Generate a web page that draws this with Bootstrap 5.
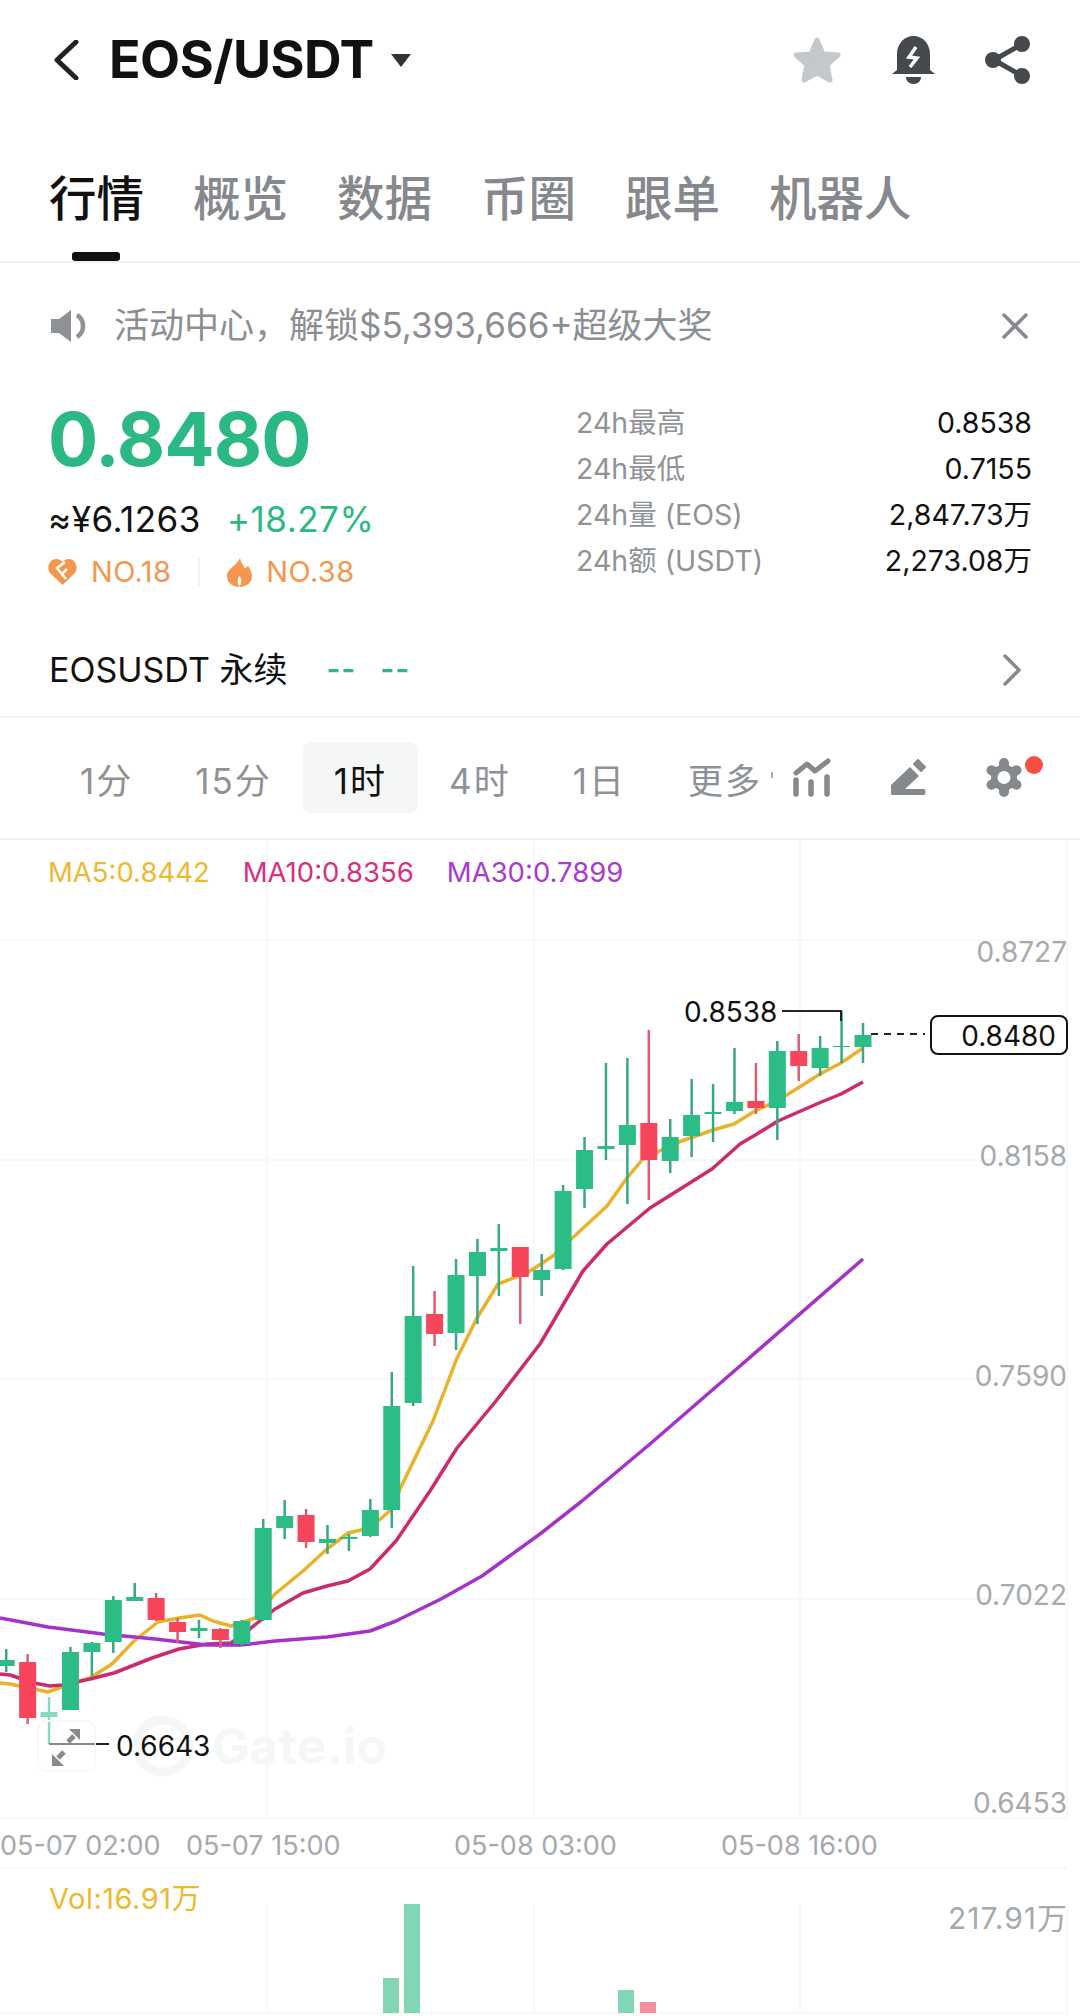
<!DOCTYPE html>
<html lang="zh-CN">
<head>
    <meta charset="UTF-8">
    <meta name="viewport" content="width=device-width, initial-scale=1.0">
    <title>EOS/USDT</title>
    <link href="https://cdn.jsdelivr.net/npm/bootstrap@5.3.0/dist/css/bootstrap.min.css" rel="stylesheet">
    <style>
        body {
            background-color: #fff;
            color: #111;
            font-family: Inter, "Noto Sans CJK SC", sans-serif;
            overflow: hidden;
        }
        .page { width: 1080px; height: 2016px; overflow: hidden; }
        .top-bar { height: 120px; padding: 0 49px 0 53px; }
        .pair-title { font-size: 52px; font-weight: 700; margin-left: 30px; letter-spacing: -.5px; line-height: 1; }
        .top-icons { gap: 50px; }
        .main-tabs { height: 143px; padding: 0 0 0 49px; gap: 49px; border-bottom: 2px solid #f0f1f2; position: relative; }
        .main-tab { font-size: 47.5px; font-weight: 500; color: #85888c; line-height: 1; padding-top: 17px; }
        .main-tab.on { color: #111; }
        .tab-mark { position: absolute; left: 72px; bottom: 0; width: 48px; height: 9px; border-radius: 3px; background: #111; }
        .notice { height: 125px; padding: 0 52px 0 51px; }
        .notice-text { font-size: 35px; color: #8b8e92; margin-left: 27px; line-height: 1; }
        .stats { height: 235px; padding: 11px 48px 0 48px; }
        .last-price { font-size: 74.5px; font-weight: 700; color: #2bb884; line-height: 80px; letter-spacing: -1px; }
        .sub-price { font-size: 35px; line-height: 40px; margin-top: 20px; letter-spacing: .5px; }
        .sub-price .up { color: #2bb884; margin-left: 26px; }
        .rank-row { font-size: 29px; line-height: 36px; margin-top: 15px; color: #f5964f; letter-spacing: .4px; }
        .rank-icon { margin-right: 14px; }
        .rank-sep { width: 2px; height: 28px; background: #f2f2f2; margin: 0 27px 0 27px; }
        .stat-box { width: 456px; padding-top: 1px; }
        .stat-row { height: 46px; font-size: 28.5px; }
        .stat-row span:first-child { color: #8f9296; }
        .perp { height: 95px; padding: 0 58px 0 49px; border-bottom: 2px solid #f2f3f4; }
        .perp-name { font-size: 34px; }
        .perp-dash { font-size: 30px; font-weight: 600; color: #2bb884; margin-left: 39px; letter-spacing: 1px; }
        .period-row { height: 122px; padding: 24px 62px 0 49px; border-bottom: 2px solid #f2f3f4; position: relative; }
        .period { font-size: 35px; letter-spacing: 2px; color: #8e9195; padding: 0 31px; height: 71px; line-height: 79px; border-radius: 8px; white-space: nowrap; flex-shrink: 0; }
        .period.on { background: #f5f6f7; color: #111; }
        .period-icons { gap: 59px; margin-top: 16px; flex-shrink: 0; }
        .more-tick { position: absolute; left: 771px; top: 54px; width: 2px; height: 6px; background: #a9acb0; }
        .gear-wrap { position: relative; }
        .gear-dot { position: absolute; width: 18px; height: 18px; border-radius: 50%; background: #f4503f; right: -21px; top: -2px; }
        .chart-box { position: relative; height: 1177px; }
        .chart-box svg { display: block; }
        .ma-legend { position: absolute; left: 48px; top: 14px; font-size: 27.5px; gap: 33px; line-height: 36px; }
        .ma5 { color: #ecb92f; }
        .ma10 { color: #d6307f; }
        .ma30 { color: #a83bcb; }
        .axis-label { font: 28px Inter, "Noto Sans CJK SC", sans-serif; fill: #a6a9ad; }
        .date-label { font: 27px Inter, sans-serif; fill: #a6a9ad; }
        .amount-label { font: 30px Inter, "Noto Sans CJK SC", sans-serif; fill: #a6a9ad; letter-spacing: 1px; }
        .mark-label { font: 28px Inter, sans-serif; fill: #111; }
        .vol-label { font: 29px Inter, "Noto Sans CJK SC", sans-serif; fill: #ecb92f; letter-spacing: .5px; }
        .wm-label { font: 700 50px Inter, sans-serif; fill: #f5f6f6; }
    </style>
</head>
<body>
<div class="page">

    <div class="top-bar d-flex align-items-center">
        <svg width="26" height="40" viewBox="0 0 26 40"><polyline points="23,2 4,20 23,38" fill="none" stroke="#222" stroke-width="5" stroke-linecap="round" stroke-linejoin="round"/></svg>
        <span class="pair-title">EOS/USDT</span>
        <svg class="ms-3" width="22" height="15" viewBox="0 0 22 15"><polygon points="1,1 21,1 11,14" fill="#333"/></svg>
        <div class="top-icons d-flex align-items-center ms-auto">
            <svg width="50" height="48" viewBox="0 0 50 48"><polygon points="25,4 31,18 46,19 35,29 38,44 25,37 12,44 15,29 4,19 19,18" fill="#c4c8cb" stroke="#c4c8cb" stroke-width="5" stroke-linejoin="round"/></svg>
            <svg width="43" height="48" viewBox="0 0 43 48">
                <path d="M5 34V18C5 8 12 0 21.500 0S38 8 38 18V34L43 38H0Z" fill="#45484d"/>
                <path d="M14 41H29C29 45 26 48 21.500 48S14 45 14 41Z" fill="#45484d"/>
                <path d="M24 11L17 21L25 22L18 31" fill="none" stroke="#fff" stroke-width="3.500"/>
            </svg>
            <svg width="46" height="48" viewBox="0 0 46 48">
                <path d="M37 8L9 24L37 40" fill="none" stroke="#45484d" stroke-width="5"/>
                <circle cx="37" cy="8" r="8" fill="#45484d"/><circle cx="8" cy="24" r="8" fill="#45484d"/><circle cx="37" cy="40" r="8" fill="#45484d"/>
            </svg>
        </div>
    </div>

    <div class="main-tabs d-flex align-items-center">
        <span class="main-tab on">行情</span>
        <span class="main-tab">概览</span>
        <span class="main-tab">数据</span>
        <span class="main-tab">币圈</span>
        <span class="main-tab">跟单</span>
        <span class="main-tab">机器人</span>
        <div class="tab-mark"></div>
    </div>

    <div class="notice d-flex align-items-center">
        <svg width="36" height="32" viewBox="0 0 36 32">
            <path d="M0 9H8L20 0V32L8 23H0Z" fill="#8e9195"/>
            <path d="M26 5C34 10 34 22 26 27" fill="none" stroke="#8e9195" stroke-width="4.500"/>
        </svg>
        <span class="notice-text">活动中心，解锁$5,393,666+超级大奖</span>
        <svg class="ms-auto" width="26" height="26" viewBox="0 0 26 26"><path d="M2 2L24 24M24 2L2 24" stroke="#85888c" stroke-width="3.500" stroke-linecap="round"/></svg>
    </div>

    <div class="stats d-flex justify-content-between">
        <div>
            <div class="last-price">0.8480</div>
            <div class="sub-price">≈¥6.1263<span class="up">+18.27%</span></div>
            <div class="rank-row d-flex align-items-center">
                <svg width="29" height="26" viewBox="0 0 29 26" class="rank-icon">
                    <path d="M14.500 26L2 14C-2 8 2 0 8 0C11 0 13 1 14.500 3C16 1 18 0 21 0C27 0 31 8 27 14Z" fill="#f5964f"/>
                    <path d="M17 3L9 9L13 14M19 10L14 15L18 20" fill="none" stroke="#fff" stroke-width="2.500"/>
                </svg>
                <span>NO.18</span>
                <div class="rank-sep"></div>
                <svg width="25" height="29" viewBox="0 0 25 29" class="rank-icon">
                    <path d="M13 0C14 6 17 7 18 11C19 9 20 9 21 8C24 12 25 16 25 18C25 25 19 29 12.500 29C6 29 0 25 0 18C0 10 10 8 13 0Z" fill="#f5964f"/>
                    <path d="M12.500 18C10 21 10 24 12.500 29C15 24 15 21 12.500 18Z" fill="#fff"/>
                </svg>
                <span>NO.38</span>
            </div>
        </div>
        <div class="stat-box">
            <div class="stat-row d-flex justify-content-between align-items-center"><span>24h最高</span><span>0.8538</span></div>
            <div class="stat-row d-flex justify-content-between align-items-center"><span>24h最低</span><span>0.7155</span></div>
            <div class="stat-row d-flex justify-content-between align-items-center"><span>24h量 (EOS)</span><span>2,847.73万</span></div>
            <div class="stat-row d-flex justify-content-between align-items-center"><span>24h额 (USDT)</span><span>2,273.08万</span></div>
        </div>
    </div>

    <div class="perp d-flex align-items-center">
        <span class="perp-name">EOSUSDT 永续</span>
        <span class="perp-dash">--</span>
        <span class="perp-dash ms-4">--</span>
        <svg class="ms-auto" width="20" height="32" viewBox="0 0 20 32"><polyline points="3,2 17,16 3,30" fill="none" stroke="#85888c" stroke-width="3.500" stroke-linecap="round" stroke-linejoin="round"/></svg>
    </div>

    <div class="period-row d-flex align-items-start">
        <span class="period">1分</span>
        <span class="period">15分</span>
        <span class="period on">1时</span>
        <span class="period">4时</span>
        <span class="period">1日</span>
        <span class="period">更多</span>
        <span class="more-tick"></span>
        <div class="period-icons d-flex align-items-center ms-auto">
            <svg width="38" height="39" viewBox="0 0 38 39">
                <polyline points="3,15 14,6 22,13 35,3" fill="none" stroke="#85888c" stroke-width="5" stroke-linecap="round" stroke-linejoin="round"/>
                <path d="M3 22V36M18 24V36M34 19V36" stroke="#85888c" stroke-width="5.500" stroke-linecap="round"/>
            </svg>
            <svg width="37" height="37" viewBox="0 0 37 37">
                <path d="M1 35V26L20 8L29 17L15 30H34C36 30 36 36 34 36H2Z" fill="#85888c"/>
                <path d="M24 5L28 1L35 8L31 12Z" fill="#85888c" stroke="#85888c" stroke-width="2" stroke-linejoin="round"/>
            </svg>
            <div class="gear-wrap">
                <svg class="d-block" width="36" height="39" viewBox="0 0 36 39">
                    <path d="M18 5V34M5.500 12.250L30.500 26.750M30.500 12.250L5.500 26.750" stroke="#85888c" stroke-width="10" stroke-linecap="round"/>
                    <circle cx="18" cy="19.500" r="13" fill="#85888c"/>
                    <circle cx="18" cy="19.500" r="6.500" fill="#fff"/>
                </svg>
                <div class="gear-dot"></div>
            </div>
        </div>
    </div>

    <div class="chart-box">
        <svg id="klineChart" width="1080" height="1177" viewBox="0 839 1080 1177"></svg>
        <div class="ma-legend d-flex">
            <span class="ma5">MA5:0.8442</span>
            <span class="ma10">MA10:0.8356</span>
            <span class="ma30">MA30:0.7899</span>
        </div>
    </div>
</div>

<script src="https://cdn.jsdelivr.net/npm/bootstrap@5.3.0/dist/js/bootstrap.bundle.min.js"></script>
<script>
    // [high, open/close top, open/close bottom, low, colour]
    var candles = [
        [1648, 1659, 1665, 1671, 'g'], [1653, 1661, 1717, 1723, 'r'], [1696, 1711, 1716, 1743, 'f'],
        [1646, 1651, 1709, 1709, 'g'], [1641, 1642, 1651, 1675, 'g'], [1595, 1599, 1641, 1652, 'g'],
        [1582, 1596, 1600, 1600, 'g'], [1592, 1597, 1619, 1620, 'r'], [1617, 1621, 1631, 1642, 'r'],
        [1619, 1627, 1630, 1637, 'g'], [1627, 1628, 1639, 1647, 'r'], [1619, 1620, 1643, 1645, 'g'],
        [1518, 1527, 1619, 1620, 'g'], [1499, 1515, 1527, 1538, 'g'], [1508, 1514, 1541, 1547, 'r'],
        [1524, 1538, 1542, 1553, 'g'], [1533, 1536, 1538, 1550, 'g'], [1498, 1509, 1535, 1536, 'g'],
        [1371, 1405, 1509, 1527, 'g'], [1265, 1315, 1402, 1405, 'g'], [1290, 1313, 1333, 1345, 'r'],
        [1258, 1274, 1332, 1349, 'g'], [1238, 1251, 1275, 1323, 'g'], [1223, 1247, 1250, 1295, 'g'],
        [1246, 1246, 1276, 1323, 'r'], [1253, 1269, 1279, 1295, 'g'], [1184, 1190, 1268, 1269, 'g'],
        [1136, 1149, 1188, 1207, 'g'], [1062, 1145, 1148, 1159, 'g'], [1057, 1124, 1144, 1203, 'g'],
        [1029, 1122, 1159, 1199, 'r'], [1118, 1136, 1160, 1172, 'g'], [1078, 1114, 1135, 1156, 'g'],
        [1083, 1111, 1113, 1141, 'g'], [1047, 1101, 1110, 1113, 'g'], [1062, 1100, 1107, 1113, 'r'],
        [1040, 1050, 1107, 1139, 'g'], [1033, 1050, 1065, 1080, 'r'], [1035, 1047, 1067, 1075, 'g'],
        [1010, 1045, 1046, 1062, 'g'], [1022, 1034, 1046, 1062, 'g']
    ];
    var ma5 = '0,1682 10,1683 34,1688 48,1691 62,1686 90,1677 112,1663 134,1640 158,1621 179,1617 200,1614 213,1620 231,1625 255,1617 275,1593 303,1570 327,1548 348,1532 370,1527 393,1507 400,1488 433,1420 457,1357 477,1317 498,1283 527,1272 553,1255 607,1205 627,1177 642,1159 673,1143 713,1129 734,1123 755,1110 777,1100 798,1087 820,1073 841,1062 863,1047';
    var ma10 = '0,1673 10,1674 34,1682 50,1685 62,1684 90,1678 114,1672 152,1657 179,1648 207,1643 231,1642 251,1627 275,1608 303,1592 327,1585 348,1580 370,1568 396,1540 430,1490 457,1447 496,1400 540,1343 583,1270 607,1243 650,1207 712,1168 740,1143 757,1133 778,1120 819,1102 841,1093 863,1081';
    var ma30 = '0,1617 48,1626 103,1633 155,1638 207,1644 241,1644 275,1640 327,1636 370,1630 396,1620 441,1598 482,1575 540,1533 582,1500 650,1443 740,1365 863,1258';

    var g = '';
    [939, 1159, 1378, 1598, 1817, 1867, 2012].forEach(function(y) {
        g += '<line x1="0" x2="1067" y1="' + y + '" y2="' + y + '" stroke="#f7f8f8" stroke-width="2"/>';
    });
    [267, 534, 800, 1067].forEach(function(x) {
        g += '<line x1="' + x + '" x2="' + x + '" y1="839" y2="1817" stroke="#f7f8f8" stroke-width="2"/>';
        g += '<line x1="' + x + '" x2="' + x + '" y1="1903" y2="2012" stroke="#f7f8f8" stroke-width="2"/>';
    });

    // watermark
    g += '<circle cx="163" cy="1745" r="26" fill="none" stroke="#f5f6f6" stroke-width="9"/>';
    g += '<text class="wm-label" x="212" y="1763">Gate.io</text>';

    [[ma5, '#eab12a'], [ma10, '#cc2a6e'], [ma30, '#a532c8']].forEach(function(m) {
        g += '<polyline points="' + m[0] + '" fill="none" stroke="' + m[1] + '" stroke-width="3.500" stroke-linejoin="round"/>';
    });

    candles.forEach(function(c, i) {
        var x = 6.2 + 21.42 * i;
        var body = c[4] == 'g' ? '#2bbd85' : c[4] == 'r' ? '#f7455c' : '#8bd9bb';
        var wick = c[4] == 'g' ? '#36a883' : c[4] == 'r' ? '#dc5d76' : '#8bd9bb';
        g += '<line x1="' + x + '" x2="' + x + '" y1="' + c[0] + '" y2="' + c[3] + '" stroke="' + wick + '" stroke-width="2.500"/>';
        g += '<rect x="' + (x - 8.5) + '" y="' + c[1] + '" width="17" height="' + (c[2] - c[1]) + '" fill="' + body + '"/>';
    });

    // fullscreen button over the low marker
    g += '<rect x="38" y="1720" width="57" height="50" rx="8" fill="none" stroke="#f8f8f9" stroke-width="2"/>';
    g += '<path d="M68 1741L74 1735" stroke="#8a8a8a" stroke-width="5"/><polygon points="69,1728 80,1728 80,1739" fill="#8a8a8a"/>';
    g += '<path d="M58 1757L64 1751" stroke="#8a8a8a" stroke-width="5"/><polygon points="52,1753 52,1765 64,1765" fill="#8a8a8a"/>';

    // high, low and last price markers
    g += '<polyline points="782,1010 841,1010 841,1020" fill="none" stroke="#222" stroke-width="2"/>';
    g += '<text class="mark-label" x="684" y="1021">0.8538</text>';
    g += '<polyline points="49,1743 95,1743" fill="none" stroke="#888" stroke-width="2"/>';
    g += '<line x1="96" x2="109" y1="1743" y2="1743" stroke="#222" stroke-width="2"/>';
    g += '<text class="mark-label" x="116" y="1755">0.6643</text>';
    g += '<line x1="871" x2="925" y1="1033" y2="1033" stroke="#222" stroke-width="2" stroke-dasharray="7 6"/>';
    g += '<rect x="931" y="1015" width="136" height="38" rx="7" fill="#fff" stroke="#111" stroke-width="2"/>';
    g += '<text class="mark-label" x="1056" y="1045" text-anchor="end">0.8480</text>';

    [['0.8727', 961], ['0.8158', 1165], ['0.7590', 1385], ['0.7022', 1604], ['0.6453', 1812]].forEach(function(t) {
        g += '<text class="axis-label" x="1067" y="' + t[1] + '" text-anchor="end">' + t[0] + '</text>';
    });
    g += '<text class="amount-label" x="1068" y="1928" text-anchor="end">217.91万</text>';
    [['05-07 02:00', 0], ['05-07 15:00', 186], ['05-08 03:00', 454], ['05-08 16:00', 721]].forEach(function(t) {
        g += '<text class="date-label" x="' + t[1] + '" y="1854">' + t[0] + '</text>';
    });

    g += '<text class="vol-label" x="49" y="1908">Vol:16.91万</text>';
    [[383, 1977, '#83d6b4'], [404, 1903, '#83d6b4'], [618, 1989, '#83d6b4'], [640, 2001, '#f58ea0']].forEach(function(b) {
        g += '<rect x="' + b[0] + '" y="' + b[1] + '" width="16" height="' + (2012 - b[1]) + '" fill="' + b[2] + '"/>';
    });

    document.getElementById('klineChart').innerHTML = g;
</script>
</body>
</html>
